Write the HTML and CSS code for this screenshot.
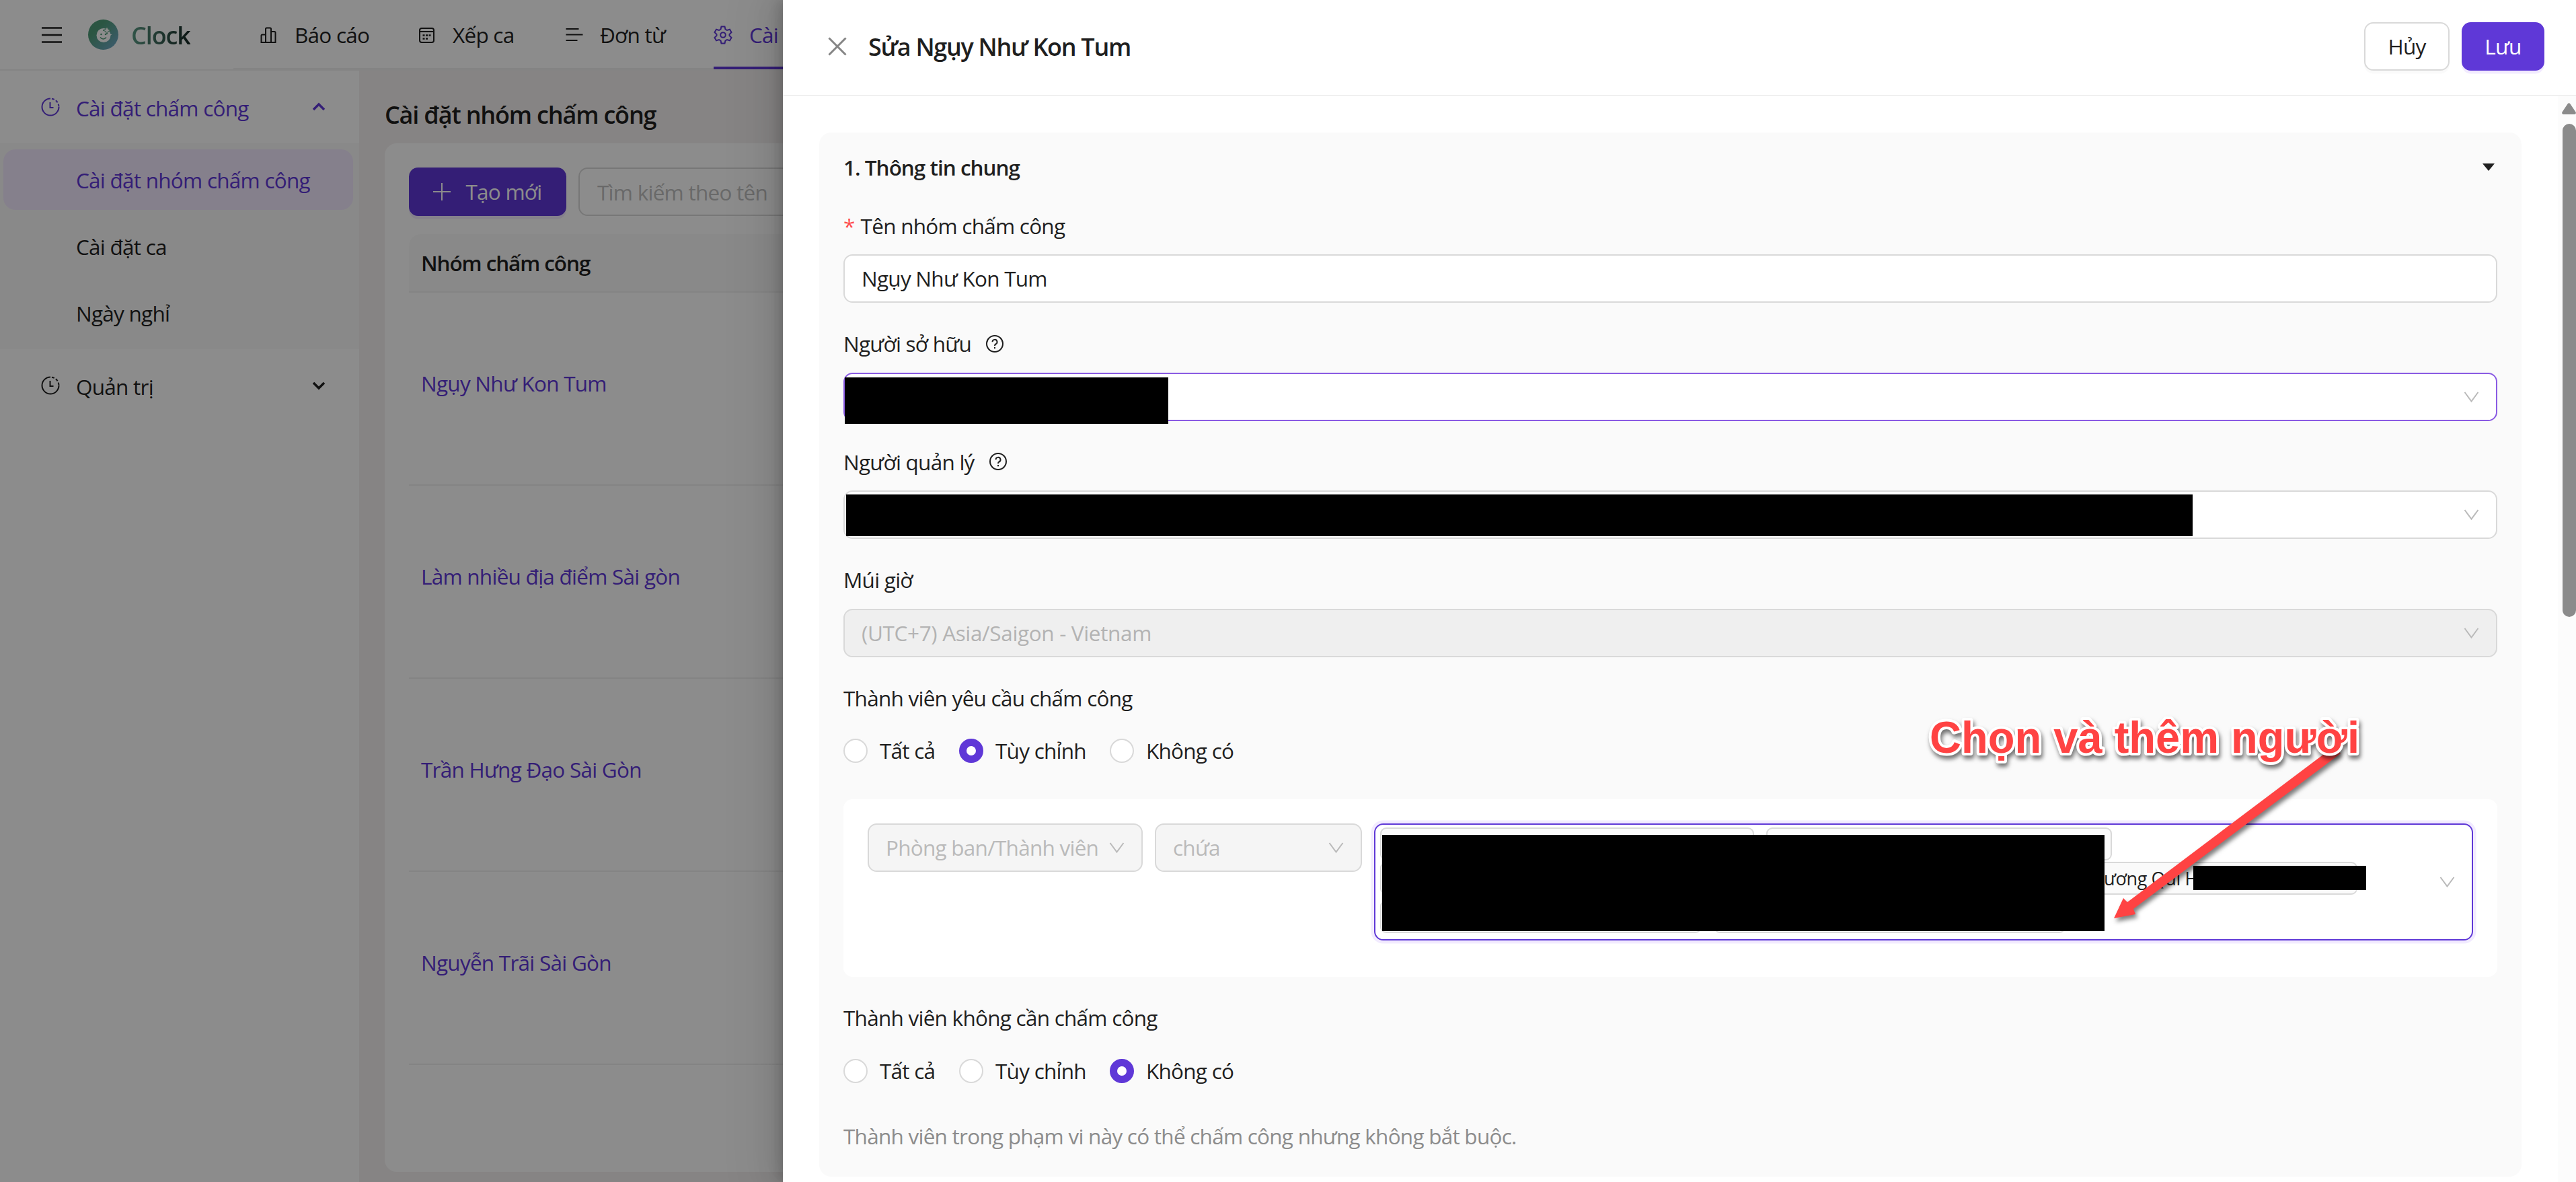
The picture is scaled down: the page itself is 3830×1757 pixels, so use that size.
FILE: index.html
```html
<!DOCTYPE html>
<html lang="vi">
<head>
  <meta charset="UTF-8">
  <meta name="viewport" content="width=device-width, initial-scale=1.0">
  <title>Clock - Cài đặt nhóm chấm công</title>
  <link rel="stylesheet" href="styles.css">
</head>
<body>
  <header class="header">
    <div class="brand">
      <svg class="menu-icon" viewBox="0 0 32 24"><path d="M1 1.500h30M1 12h30M1 22.500h30"/></svg>
      <svg class="logo" viewBox="0 0 45 45">
        <defs>
          <linearGradient id="logoFill" x1="0" y1="0" x2="1" y2="1">
            <stop offset="0.3" stop-color="#4f9c78"/>
            <stop offset="1" stop-color="#73a9d0"/>
          </linearGradient>
        </defs>
        <circle cx="22.500" cy="22.500" r="22.500" fill="url(#logoFill)"/>
        <circle cx="23" cy="23.500" r="10.500" fill="#fff"/>
        <path d="M28 10l1.700 4.300 4.300 1.700-4.300 1.700-1.700 4.300-1.700-4.300-4.300-1.700 4.300-1.700z" fill="#fff" stroke="#4f9c78" stroke-width="1"/>
        <path d="M32 19l1 2.500 2.500 1-2.500 1-1 2.500-1-2.500-2.500-1 2.500-1z" fill="#fff"/>
        <circle cx="19.500" cy="22" r="1.300" fill="#4f9c78"/>
        <circle cx="26" cy="22" r="1.300" fill="#4f9c78"/>
        <path d="M18 26.500q4.500 5 9 0" fill="none" stroke="#4f9c78" stroke-width="1.500"/>
      </svg>
      <span class="brand-name">Clock</span>
    </div>
    <nav class="nav">
      <a class="nav-item nav-report" href="#">
        <svg class="nav-icon" viewBox="0 0 28 28"><path d="M3.500 25V15a1.500 1.500 0 0 1 1.500-1.500h5V25zM10 25V5a1.500 1.500 0 0 1 1.500-1.500h5A1.500 1.500 0 0 1 18 5v20zM18 9h5a1.500 1.500 0 0 1 1.500 1.500V25H18z"/></svg>
        Báo cáo
      </a>
      <a class="nav-item nav-shift" href="#">
        <svg class="nav-icon" viewBox="0 0 28 28"><rect x="4" y="4" width="21" height="21" rx="3"/><path d="M4 9h21"/><path d="M8.500 14.500h3M13 14.500h3M17.500 14.500h3M8.500 19.500h3M13 19.500h3" stroke-width="2.500"/></svg>
        Xếp ca
      </a>
      <a class="nav-item nav-form" href="#">
        <svg class="nav-icon" viewBox="0 0 28 28"><path d="M2.500 5h19M2.500 13.500h25M2.500 22h17"/></svg>
        Đơn từ
      </a>
      <a class="nav-item nav-setting active" href="#">
        <svg class="nav-icon" viewBox="0 0 28 28"><path d="M11.500 1.500h5l1 4 2.500 1.500 4-1.200 2.500 4.300-3 2.900v2l3 2.900-2.500 4.300-4-1.200-2.500 1.500-1 4h-5l-1-4L8 21l-4 1.200-2.500-4.300 3-2.900v-2l-3-2.900L4 5.800 8 7l2.500-1.500z"/><circle cx="14" cy="14" r="3.800"/></svg>
        Cài đặt
      </a>
    </nav>
  </header>

  <div class="layout">
    <aside class="sider">
      <div class="menu-title open">
        <svg class="clock-icon" viewBox="0 0 28 28"><path d="M14 1.500a12.500 12.500 0 1 0 12.500 12.500"/><path d="M16 1.700a12.500 12.500 0 0 1 10.500 12" stroke-dasharray="4 2.500"/><path d="M13.500 7v8h5"/></svg>
        <span>Cài đặt chấm công</span>
        <svg class="arrow" viewBox="0 0 20 12"><path d="M2 10l8-8 8 8"/></svg>
      </div>
      <ul class="submenu">
        <li class="submenu-item selected">Cài đặt nhóm chấm công</li>
        <li class="submenu-item">Cài đặt ca</li>
        <li class="submenu-item">Ngày nghỉ</li>
      </ul>
      <div class="menu-title">
        <svg class="clock-icon" viewBox="0 0 28 28"><path d="M14 1.500a12.500 12.500 0 1 0 12.500 12.500"/><path d="M16 1.700a12.500 12.500 0 0 1 10.500 12" stroke-dasharray="4 2.500"/><path d="M13.500 7v8h5"/></svg>
        <span>Quản trị</span>
        <svg class="arrow" viewBox="0 0 20 12"><path d="M2 2l8 8 8-8"/></svg>
      </div>
    </aside>

    <main class="content">
      <h1 class="page-title">Cài đặt nhóm chấm công</h1>
      <div class="card">
        <div class="toolbar">
          <button class="btn btn-primary btn-create">
            <svg class="plus" viewBox="0 0 26 26"><path d="M13 0v26M0 13h26"/></svg>
            Tạo mới
          </button>
          <div class="search">Tìm kiếm theo tên</div>
        </div>
        <div class="table">
          <div class="table-head">Nhóm chấm công</div>
          <div class="table-row">Ngụy Như Kon Tum</div>
          <div class="table-row">Làm nhiều địa điểm Sài gòn</div>
          <div class="table-row">Trần Hưng Đạo Sài Gòn</div>
          <div class="table-row">Nguyễn Trãi Sài Gòn</div>
        </div>
      </div>
    </main>
  </div>

  <div class="mask"></div>

  <section class="drawer">
    <div class="drawer-header">
      <svg class="close" viewBox="0 0 28 28"><path d="M1.500 1.500l25 25M26.500 1.500l-25 25"/></svg>
      <h2 class="drawer-title">Sửa Ngụy Như Kon Tum</h2>
      <button class="btn btn-cancel">Hủy</button>
      <button class="btn btn-primary btn-save">Lưu</button>
    </div>
    <div class="drawer-body">
      <div class="panel-wrap">
        <div class="panel">
          <div class="panel-header">
            <span>1. Thông tin chung</span>
            <span class="collapse"></span>
          </div>

          <div class="form-item">
            <div class="label"><span class="required">*</span>Tên nhóm chấm công</div>
            <div class="control">Ngụy Như Kon Tum</div>
          </div>

          <div class="form-item">
            <div class="label">Người sở hữu
              <svg class="help" viewBox="0 0 26 26"><circle cx="13" cy="13" r="12"/><path d="M9.500 10.300a3.500 3.500 0 1 1 5 3.200c-1 .5-1.500 1.100-1.500 2.500"/><path d="M13 18v2.200"/></svg>
            </div>
            <div class="control hover">
              <span class="redact redact-owner"></span>
              <svg class="caret" viewBox="0 0 23 16"><path d="M1.500 1l10 13.500 10-13.500"/></svg>
            </div>
          </div>

          <div class="form-item">
            <div class="label">Người quản lý
              <svg class="help" viewBox="0 0 26 26"><circle cx="13" cy="13" r="12"/><path d="M9.500 10.300a3.500 3.500 0 1 1 5 3.200c-1 .5-1.500 1.100-1.500 2.500"/><path d="M13 18v2.200"/></svg>
            </div>
            <div class="control">
              <span class="redact redact-manager"></span>
              <svg class="caret" viewBox="0 0 23 16"><path d="M1.500 1l10 13.500 10-13.500"/></svg>
            </div>
          </div>

          <div class="form-item">
            <div class="label">Múi giờ</div>
            <div class="control disabled">
              (UTC+7) Asia/Saigon - Vietnam
              <svg class="caret" viewBox="0 0 23 16"><path d="M1.500 1l10 13.500 10-13.500"/></svg>
            </div>
          </div>

          <div class="form-item">
            <div class="label">Thành viên yêu cầu chấm công</div>
            <div class="radio-group">
              <span class="radio-item radio-all"><i class="radio"></i>Tất cả</span>
              <span class="radio-item radio-custom"><i class="radio checked"></i>Tùy chỉnh</span>
              <span class="radio-item"><i class="radio"></i>Không có</span>
            </div>
          </div>

          <div class="condition">
            <div class="control select-type">
              Phòng ban/Thành viên
              <svg class="caret" viewBox="0 0 23 16"><path d="M1.500 1l10 13.500 10-13.500"/></svg>
            </div>
            <div class="control select-op">
              chứa
              <svg class="caret" viewBox="0 0 23 16"><path d="M1.500 1l10 13.500 10-13.500"/></svg>
            </div>
            <div class="multi-select">
              <div class="tags">
                <div class="tag-row">
                  <span class="tag tag-a"></span>
                  <span class="tag tag-b"></span>
                </div>
                <div class="tag-row">
                  <span class="tag tag-c"><span class="tag-text">ương Quí H</span></span>
                </div>
                <div class="tag-row">
                  <span class="tag tag-d"></span>
                  <span class="tag tag-e"></span>
                </div>
              </div>
              <svg class="caret" viewBox="0 0 23 16"><path d="M1.500 1l10 13.500 10-13.500"/></svg>
              <span class="redact redact-members"></span>
              <span class="redact redact-name"></span>
            </div>
          </div>

          <div class="form-item">
            <div class="label">Thành viên không cần chấm công</div>
            <div class="radio-group">
              <span class="radio-item radio-all"><i class="radio"></i>Tất cả</span>
              <span class="radio-item radio-custom"><i class="radio"></i>Tùy chỉnh</span>
              <span class="radio-item"><i class="radio checked"></i>Không có</span>
            </div>
          </div>

          <p class="note">Thành viên trong phạm vi này có thể chấm công nhưng không bắt buộc.</p>
        </div>
      </div>
      <div class="scrollbar">
        <svg class="scroll-up" viewBox="0 0 21 17"><path d="M8.500 1.500q2-2.500 4 0l8 12q1.200 3-1.500 3.500h-17q-2.700-.5-1.500-3.500z"/></svg>
        <div class="scroll-thumb"></div>
      </div>
    </div>
  </section>

  <!-- callout over the member select -->
  <svg class="callout" viewBox="0 0 720 360">
    <g class="callout-arrow">
      <path d="M636 75L645 86L337 317L340 325L308 331L322 301L328 307z"/>
    </g>
    <text class="callout-text" x="34" y="85" textLength="639" lengthAdjust="spacingAndGlyphs">Chọn và thêm người</text>
  </svg>
</body>
</html>
```

FILE: styles.css
```css
* {
  box-sizing: border-box;
}

body {
  margin: 0;
  width: 3830px;
  height: 1757px;
  overflow: hidden;
  position: relative;
  font-family: "Open Sans", "Noto Sans", sans-serif;
  font-size: 31.5px;
  line-height: 49.5px;
  letter-spacing: -0.75px;
  color: #1f1f1f;
  background-color: #fff;
  white-space: nowrap;
}

svg {
  display: block;
  flex: none;
  fill: none;
  stroke: currentColor;
  stroke-width: 2;
  overflow: visible;
}

/* top bar */
.header {
  display: flex;
  height: 105px;
}

.brand {
  display: flex;
  align-items: center;
  width: 347px;
  padding-left: 61px;
  border-bottom: 2px solid #f0f0f0;
}

.menu-icon {
  width: 32px;
  height: 24px;
  margin-right: 38px;
  stroke-width: 2.5;
}

.logo {
  width: 45px;
  height: 45px;
  margin-right: 19px;
  stroke: none;
}

.brand-name {
  padding-top: 3px;
  font-size: 36px;
  font-weight: 600;
  letter-spacing: -1.1px;
  background-image: linear-gradient(90deg, #5b9c86, #152824);
  -webkit-background-clip: text;
  background-clip: text;
  color: transparent;
}

.nav {
  display: flex;
  flex: 1;
  padding-left: 38px;
  border-bottom: 4px solid #f0f0f0;
}

.nav-item {
  display: flex;
  align-items: center;
  height: 103px;
  color: #1f1f1f;
  text-decoration: none;
}

.nav-icon {
  width: 28px;
  height: 28px;
  margin-right: 25px;
}

.nav-report {
  width: 235px;
}

.nav-shift {
  width: 219px;
}

.nav-form {
  width: 222px;
}

.nav-setting {
  padding-top: 4px;
  border-bottom: 4px solid #5f38d7;
}

.nav-item.active {
  color: #5f38d7;
}

/* left menu */
.layout {
  display: flex;
  height: 1652px;
}

.sider {
  width: 534px;
  padding-top: 9px;
}

.menu-title {
  display: flex;
  align-items: center;
  height: 90px;
  margin-bottom: 9px;
  padding: 0 50px 0 61px;
}

.menu-title.open {
  color: #5f38d7;
}

.menu-title span {
  flex: 1;
  padding-top: 3px;
}

.clock-icon {
  width: 28px;
  height: 28px;
  margin-right: 24px;
}

.arrow {
  width: 20px;
  height: 12px;
  stroke-width: 3.5;
}

.submenu {
  list-style: none;
  margin: 0 0 9px;
  padding: 9px;
  padding-left: 5px;
  background-color: #fafafa;
}

.submenu-item {
  height: 90px;
  line-height: 92px;
  margin-bottom: 9px;
  padding-left: 108px;
  border-radius: 18px;
}

.submenu-item:last-child {
  margin-bottom: 0;
}

.submenu-item.selected {
  color: #5f38d7;
  background-color: #f3e9ff;
}

/* page */
.content {
  flex: 1;
  padding: 39px 38px 15px;
  background-color: #f5f0f0;
}

.page-title {
  margin: 0 0 15px;
  font-size: 36px;
  line-height: 54px;
  font-weight: 600;
  letter-spacing: -1.2px;
}

.card {
  height: 1529px;
  padding: 36px;
  background-color: #fff;
  border-radius: 18px;
}

.toolbar {
  display: flex;
  gap: 18px;
  margin-bottom: 27px;
}

.btn {
  display: flex;
  align-items: center;
  justify-content: center;
  height: 72px;
  padding: 0;
  border: none;
  border-radius: 13.5px;
  font: inherit;
  letter-spacing: inherit;
  cursor: pointer;
}

.btn-primary {
  color: #fff;
  background-color: #5f38d7;
  box-shadow: 0 4.5px 0 #f2ebff;
}

.btn-create {
  width: 234px;
  gap: 22px;
}

.plus {
  width: 26px;
  height: 26px;
}

.search {
  flex: 1;
  height: 72px;
  line-height: 69px;
  padding-left: 26px;
  border: 2px solid #d9d9d9;
  border-radius: 13.5px;
  color: #bfbfbf;
}

.table-head {
  height: 87px;
  line-height: 86px;
  padding-left: 18px;
  background-color: #fafafa;
  border-bottom: 2px solid #f0f0f0;
  border-top-left-radius: 18px;
  font-weight: 600;
  letter-spacing: -1.1px;
}

.table-row {
  height: 287px;
  line-height: 270px;
  padding-left: 18px;
  color: #5f38d7;
  border-bottom: 2px solid #f0f0f0;
}

.mask {
  position: absolute;
  inset: 0;
  background-color: rgba(0, 0, 0, 0.45);
}

/* drawer */
.drawer {
  position: absolute;
  top: 0;
  right: 0;
  bottom: 0;
  width: 2666px;
  background-color: #fff;
  box-shadow: -13px 0 36px rgba(0, 0, 0, 0.08), -7px 0 14px rgba(0, 0, 0, 0.12), -20px 0 63px 18px rgba(0, 0, 0, 0.05);
}

.drawer-header {
  display: flex;
  align-items: center;
  height: 143px;
  padding: 0 47px 4px 67px;
  border-bottom: 2px solid #f0f0f0;
}

.close {
  width: 28px;
  height: 28px;
  margin-right: 32px;
  color: #858585;
  stroke-width: 3;
}

.drawer-title {
  flex: 1;
  margin: 0;
  padding-top: 3px;
  font-size: 36px;
  font-weight: 600;
  letter-spacing: -1.3px;
}

.btn-cancel {
  width: 127px;
  margin-right: 18px;
  color: #1f1f1f;
  background-color: #fff;
  border: 2px solid #d9d9d9;
  box-shadow: 0 4.5px 0 rgba(0, 0, 0, 0.02);
}

.btn-save {
  width: 123px;
}

.drawer-body {
  display: flex;
  height: 1614px;
}

.panel-wrap {
  flex: 1;
  padding: 54px;
}

.panel {
  padding: 27px 36px 36px;
  background-color: #fafafa;
  border-radius: 18px;
}

.panel-header {
  display: flex;
  align-items: center;
  justify-content: space-between;
  margin-bottom: 37px;
  font-weight: 600;
  letter-spacing: -1px;
}

/* small triangle of the collapse header */
.collapse {
  margin-right: 4px;
  border: 9.5px solid transparent;
  border-top: 11px solid #1f1f1f;
  border-bottom: none;
}

.form-item {
  margin-bottom: 36px;
}

.label {
  display: flex;
  align-items: center;
  height: 49.5px;
  margin-bottom: 18px;
}

.required {
  margin-right: 9px;
  color: #ff4d4f;
}

.help {
  width: 26px;
  height: 26px;
  margin-left: 22px;
}

.control {
  position: relative;
  display: flex;
  align-items: center;
  justify-content: space-between;
  height: 72px;
  padding: 0 25px;
  background-color: #fff;
  border: 2px solid #d9d9d9;
  border-radius: 13.5px;
}

.control.hover {
  border-color: #8a5be3;
}

.control.disabled {
  color: #b3b3b3;
  background-color: #efefef;
  letter-spacing: -0.35px;
}

.caret {
  width: 23px;
  height: 16px;
  margin-left: auto;
  color: #bababa;
}

.redact {
  position: absolute;
  background-color: #000;
}

.redact-owner {
  left: 0;
  top: 5px;
  width: 481px;
  height: 69px;
}

.redact-manager {
  left: 2px;
  top: 4px;
  width: 2002px;
  height: 62px;
}

.radio-group {
  display: flex;
  align-items: center;
  height: 72px;
}

.radio-item {
  display: flex;
  align-items: center;
  gap: 18px;
}

.radio-all {
  width: 172px;
}

.radio-custom {
  width: 224px;
}

.radio {
  width: 36px;
  height: 36px;
  background-color: #fff;
  border: 2px solid #d9d9d9;
  border-radius: 50%;
}

.radio.checked {
  border: 11px solid #5f38d7;
}

.condition {
  display: flex;
  align-items: flex-start;
  gap: 18px;
  height: 264px;
  margin-bottom: 36px;
  padding: 36px;
  background-color: #fff;
  border-radius: 13.5px;
}

.select-type,
.select-op {
  color: #bababa;
  background-color: #f5f5f5;
}

.select-type {
  width: 409px;
}

.select-op {
  width: 308px;
}

.multi-select {
  position: relative;
  display: flex;
  align-items: center;
  flex: 1;
  height: 174px;
  padding: 0 25px 0 7px;
  border: 2px solid #5f38d7;
  border-radius: 13.5px;
  box-shadow: 0 0 0 4.5px #f2ebff;
}

.tags {
  display: flex;
  flex-direction: column;
  gap: 2px;
  align-self: flex-start;
  padding-top: 4px;
}

.tag-row {
  display: flex;
  gap: 18px;
}

.tag-row:last-child {
  margin-top: 6px;
}

.tag {
  height: 49px;
  background-color: #fafafa;
  border: 2px solid #d9d9d9;
  border-radius: 9px;
}

.tag-a {
  width: 556px;
}

.tag-b {
  width: 514px;
}

.tag-c {
  width: 1453px;
  padding-left: 1074px;
}

.tag-d {
  width: 478px;
}

.tag-e {
  width: 523px;
}

.tag-text {
  display: block;
  font-size: 27px;
  line-height: 46px;
  letter-spacing: -0.4px;
}

.redact-members {
  left: 10px;
  top: 15px;
  width: 1074px;
  height: 143px;
}

.redact-name {
  left: 1216px;
  top: 61px;
  width: 257px;
  height: 36px;
}

.note {
  margin: 0;
  color: #8c8c8c;
}

.scrollbar {
  width: 27px;
  padding: 10px 0 0 6px;
  background-color: #fcfcfc;
}

.scroll-up {
  width: 21px;
  height: 17px;
  margin-bottom: 14px;
  fill: #8b8b8b;
  stroke: none;
}

.scroll-thumb {
  width: 20px;
  height: 733px;
  margin-left: 1px;
  background-color: #8b8b8b;
  border-radius: 10px;
}

/* callout */
.callout {
  position: absolute;
  left: 2835px;
  top: 1034px;
  width: 720px;
  height: 360px;
  stroke: none;
}

.callout-arrow {
  fill: #ff4343;
  filter: drop-shadow(3px 5px 3px rgba(0, 0, 0, 0.5));
}

.callout-text {
  font-family: "Liberation Sans", Arial, sans-serif;
  font-size: 66px;
  font-weight: 700;
  letter-spacing: 0;
  fill: #ff4343;
  stroke: #fff;
  stroke-width: 8px;
  stroke-linejoin: round;
  paint-order: stroke;
  filter: drop-shadow(2px 5px 3px rgba(0, 0, 0, 0.55));
}
```
